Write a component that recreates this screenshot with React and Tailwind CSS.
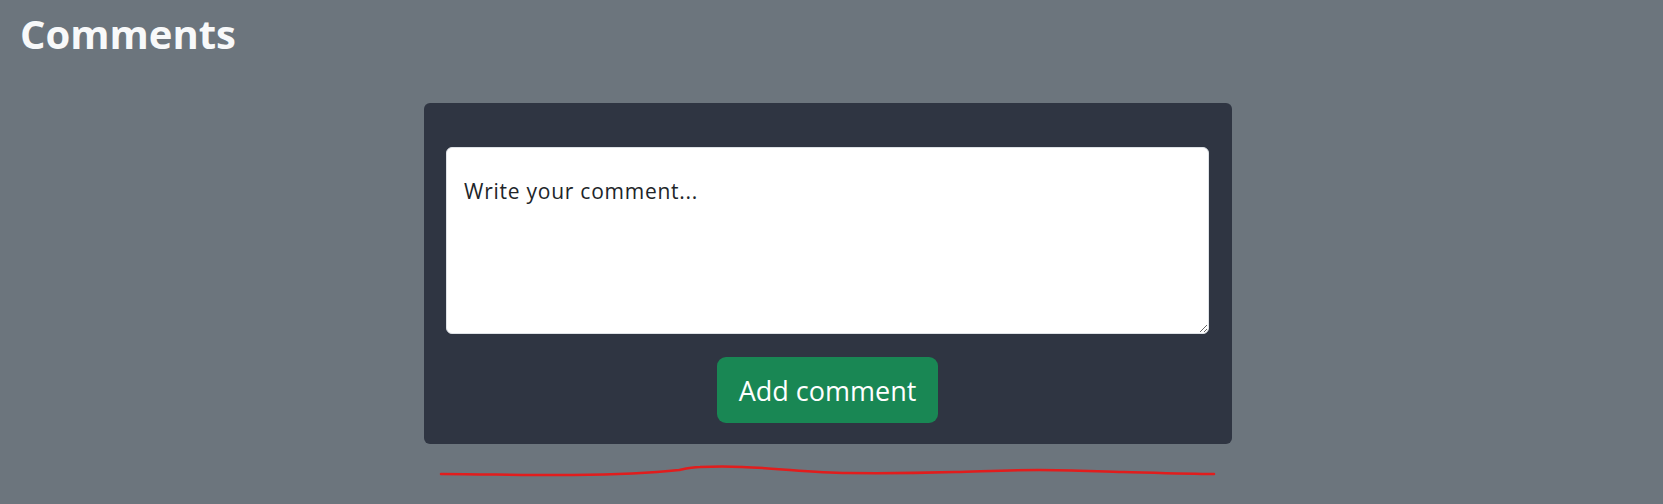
export default function App() {
  return (
    <div
      className="w-[1663px] h-[504px] bg-[#6c757d] overflow-hidden"
      style={{ fontFamily: '"Open Sans", "Noto Sans", sans-serif' }}
    >
      <h1 className="pt-[11px] pl-[20px] text-[40px] leading-[46px] font-bold text-[#f8f9fa]">
        Comments
      </h1>
      <div className="flex justify-center pr-[7px] mt-[46px]">
        <div className="w-[808px] h-[341px] bg-[#2f3542] rounded-[6px] pt-[44px] pl-[22px] pr-[23px] flex flex-col items-center">
          <textarea
            className="w-full h-[187px] bg-white rounded-[6px] border border-[#dee2e6] pt-[28px] px-[17px] text-[21px] leading-[30px] tracking-[0.75px] text-[#212529] placeholder:text-[#212529] outline-none"
            placeholder="Write your comment..."
          />
          <button className="mt-[23px] h-[66px] px-[22px] rounded-[9px] bg-[#198754] text-white text-[27px] leading-none flex items-center">
            Add comment
          </button>
        </div>
      </div>
      <svg
        className="block mt-[18px]"
        width="1663"
        height="20"
        viewBox="0 0 1663 20"
      >
        <path
          d="M441 12 C 500 12.5, 540 13.5, 573 13 C 620 12.5, 660 10, 679 8 C 688 6, 692 5, 700 5 C 715 4.5, 730 4.5, 742 5 C 780 6, 810 11, 848 11 C 890 11.5, 920 11, 955 10 C 990 9, 1010 8, 1039 8 C 1070 8, 1100 9.5, 1124 10 C 1160 11, 1190 12, 1214 12"
          fill="none"
          stroke="#e11d1d"
          strokeWidth="2.5"
          strokeLinecap="round"
        />
      </svg>
    </div>
  );
}
